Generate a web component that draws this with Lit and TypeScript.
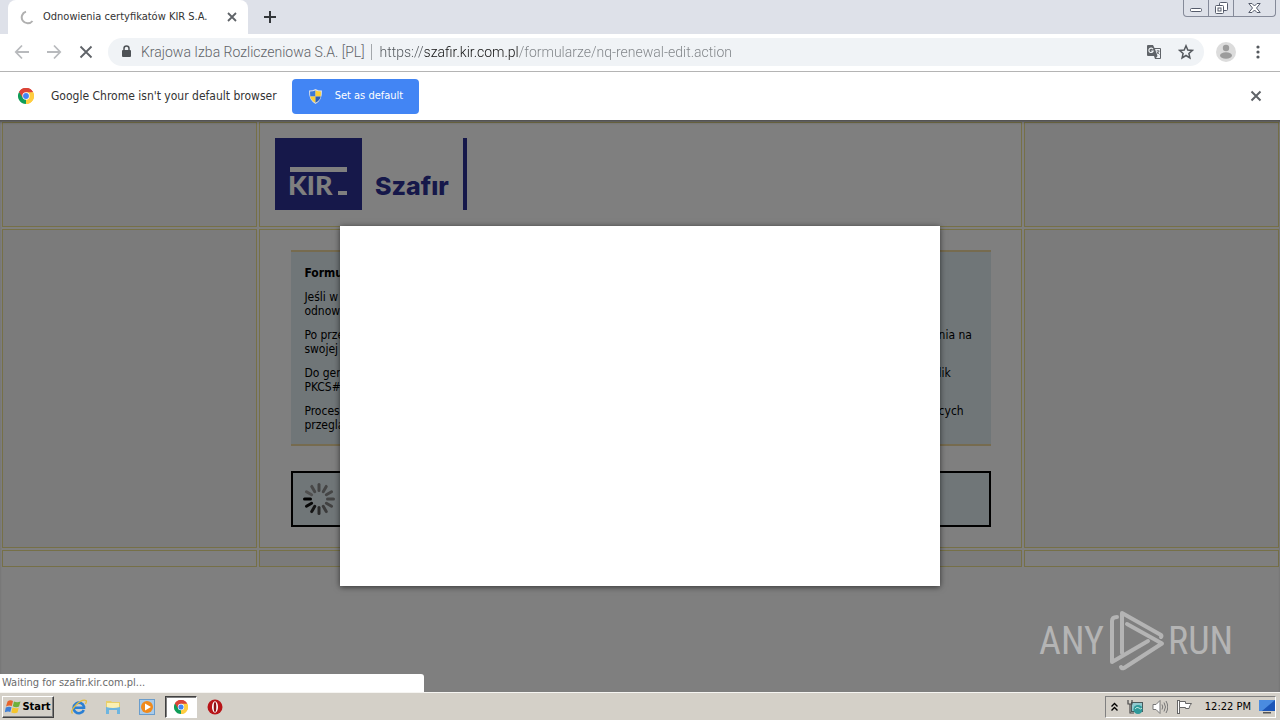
import { LitElement, html, svg, css } from "lit";
import { customElement } from "lit/decorators.js";

const chromeLogo = svg`
  <path d="M12 12 L1.6 6 A12 12 0 0 1 22.4 6 Z" fill="#db4437"/>
  <path d="M12 12 L22.4 6 A12 12 0 0 1 12 24 Z" fill="#ffcd40"/>
  <path d="M12 12 L12 24 A12 12 0 0 1 1.6 6 Z" fill="#0f9d58"/>
  <path d="M12 6.5 H22.7 L22.4 6 A12 12 0 0 0 1.6 6 L7 14.5 Z" fill="#db4437"/>
  <path d="M16.8 14.8 L11.6 24 A12 12 0 0 0 22.7 6.5 H12 Z" fill="#ffcd40"/>
  <circle cx="12" cy="12" r="5.5" fill="#fff"/>
  <circle cx="12" cy="12" r="4.4" fill="#4285f4"/>`;

const spokes = Array.from({ length: 12 }, (_, i) => {
  const shades = ["#888", "#8a8a8a", "#8a8a8a", "#868686", "#828282", "#777", "#555", "#282828", "#101010", "#000", "#a0a0a0", "#909090"];
  return svg`<line x1="17" y1="2.5" x2="17" y2="8.5" stroke=${shades[i]} stroke-width="3" stroke-linecap="round" transform=${`rotate(${i * 30} 17 17)`}/>`;
});

@customElement("browser-bar")
class BrowserBar extends LitElement {
  static styles = css`
    :host { display: block; font: 12px/16px "DejaVu Sans Condensed", "DejaVu Sans", sans-serif; color: #333; }
    button { border: 0; padding: 0; margin: 0; background: none; font: inherit; color: inherit; display: grid; place-items: center; }
    svg { display: block; }
    .strip { height: 34px; background: #dee1e9; display: flex; align-items: flex-start; padding-left: 8px; }
    .tab { align-self: stretch; width: 240px; box-sizing: border-box; background: #fff; border-radius: 8px 8px 0 0; display: flex; align-items: center; padding: 0 8px 0 12px; gap: 8px; }
    .title { flex: 1; white-space: nowrap; font-size: 11px; }
    .plus { width: 44px; height: 34px; }
    .wins { margin-left: auto; margin-right: 4px; display: flex; height: 17px; box-sizing: border-box; border: 1px solid #858a99; border-top: 0; border-radius: 0 0 4px 4px; }
    .wins button { width: 24px; }
    .wins button + button { border-left: 1px solid #858a99; width: 25px; }
    .wins button:last-child { width: 42px; }
    .tools { height: 36px; background: #fff; border-bottom: 1px solid #b4b4b4; display: flex; align-items: center; padding: 0 6px 1px; }
    .nav { width: 32px; height: 32px; }
    .omni { flex: 1; height: 28px; margin: 0 6px; border-radius: 14px; background: #f0f3f6; display: flex; align-items: center; padding: 0 2px 0 12px; font: 14px/20px "Roboto", "Open Sans", sans-serif; font-weight: 300; color: #5f6368; }
    .cert { margin-left: 9px; white-space: nowrap; }
    .rule { width: 1px; height: 16px; background: #a3a7ab; margin: 0 8px 0 6px; }
    .url { flex: 1; min-width: 0; border: 0; padding: 0; font: inherit; outline: 0; color: transparent;
      background: linear-gradient(90deg, #4d5257 45px, #111 45px 139px, #7d8185 139px); -webkit-background-clip: text; background-clip: text; }
    .act { width: 32px; height: 28px; }
    .info { height: 48px; background: #fff; display: flex; align-items: center; padding: 0 16px 0 18px; font-size: 12px; }
    .msg { margin: 0 15px 0 17px; }
    .set { display: flex; align-items: center; gap: 12px; height: 35px; padding: 0 16px; border-radius: 4px; background: #4285f4; color: #fff; font-size: 11px; }
    .close { margin-left: auto; }
  `;
  render() {
    return html`
      <div class="strip">
        <div class="tab">
          <svg width="15" height="15" viewBox="0 0 15 15" fill="none" stroke="#b0b0b0" stroke-width="2"><path d="M6 1.6A6 6 0 1 0 12.5 11"/></svg>
          <span class="title">Odnowienia certyfikatów KIR S.A.</span>
          <button aria-label="Close tab"><svg width="16" height="16" viewBox="0 0 16 16" stroke="#5f6368" stroke-width="1.800"><path d="M4 4l8 8M12 4l-8 8"/></svg></button>
        </div>
        <button class="plus" aria-label="New tab"><svg width="14" height="14" viewBox="0 0 14 14" stroke="#33363a" stroke-width="2"><path d="M7 1v12M1 7h12"/></svg></button>
        <div class="wins">
          <button aria-label="Minimize"><svg width="12" height="16" viewBox="0 0 12 16"><rect x=".5" y="8.500" width="11" height="3" rx="1" fill="#fff" stroke="#555b6b"/></svg></button>
          <button aria-label="Restore"><svg width="13" height="14" viewBox="0 0 13 14" fill="#fff" stroke="#555b6b"><rect x="4.500" y="1.500" width="8" height="8" rx="1"/><rect x=".5" y="4.500" width="8" height="8" rx="1"/><rect x="3" y="7" width="3" height="3"/></svg></button>
          <button aria-label="Close"><svg width="13" height="12" viewBox="0 0 13 12" fill="#fff" stroke="#555b6b"><path d="M.8 1.500H4L6.500 4 9 1.500H12.200L8.500 6l3.700 4.500H9L6.500 8 4 10.500H.8L4.500 6Z"/></svg></button>
        </div>
      </div>
      <div class="tools">
        <button class="nav" aria-label="Back"><svg width="16" height="16" viewBox="0 0 16 16" fill="none" stroke="#b8babd" stroke-width="1.800"><path d="M15 8H2M8 1.500L1.800 8 8 14.500"/></svg></button>
        <button class="nav" aria-label="Forward"><svg width="16" height="16" viewBox="0 0 16 16" fill="none" stroke="#b8babd" stroke-width="1.800"><path d="M1 8h13M8 1.500L14.200 8 8 14.500"/></svg></button>
        <button class="nav" aria-label="Stop"><svg width="16" height="16" viewBox="0 0 16 16" stroke="#5f6368" stroke-width="1.800"><path d="M2.500 2.500l11 11M13.500 2.500l-11 11"/></svg></button>
        <div class="omni">
          <svg width="12" height="14" viewBox="0 0 12 14"><rect x="2" y="5" width="9" height="7" rx="1" fill="#4e5256"/><path d="M4 6V3.500a2.500 2.500 0 0 1 5 0V6" fill="none" stroke="#4e5256" stroke-width="1.500"/></svg>
          <span class="cert">Krajowa Izba Rozliczeniowa S.A. [PL]</span><span class="rule"></span>
          <input class="url" aria-label="Address" spellcheck="false" value="https://szafir.kir.com.pl/formularze/nq-renewal-edit.action">
          <button class="act" aria-label="Translate"><svg width="14" height="15" viewBox="0 0 14 15"><path d="M1 0h5l1.500 3H13a1 1 0 0 1 1 1v9a1 1 0 0 1-1 1H8L7 11H1a1 1 0 0 1-1-1V1a1 1 0 0 1 1-1Z" fill="#5f6368"/><path d="M8 4h5v9H9l1.500-2Z" fill="#f0f3f6"/><path d="M6 4.200A2.200 2.200 0 1 0 6.200 6H4.200" fill="none" stroke="#f0f3f6" stroke-width="1.100"/><path d="M9.500 6h3M11 5v1M12 6q-.5 2-2.500 3M10 7l2.500 2.500" fill="none" stroke="#5f6368" stroke-width=".8"/></svg></button>
          <button class="act" aria-label="Bookmark"><svg width="16" height="16" viewBox="0 0 16 16" fill="none" stroke="#55595e" stroke-width="1.500"><path d="M8 1.800l1.800 4.200 4.500.4-3.400 3 1 4.500L8 11.500l-3.900 2.400 1-4.500-3.400-3 4.500-.4Z"/></svg></button>
        </div>
        <button class="nav" aria-label="Profile"><svg width="20" height="20" viewBox="0 0 20 20"><circle cx="10" cy="10" r="10" fill="#dcdcdc"/><circle cx="10" cy="6" r="3.200" fill="#9c9c9c"/><ellipse cx="10" cy="13.500" rx="6" ry="3.200" fill="#9c9c9c"/></svg></button>
        <button class="nav" aria-label="Menu"><svg width="4" height="14" viewBox="0 0 4 14" fill="#55595e"><circle cx="2" cy="2" r="1.600"/><circle cx="2" cy="7" r="1.600"/><circle cx="2" cy="12" r="1.600"/></svg></button>
      </div>
      <div class="info">
        <svg width="16" height="16" viewBox="0 0 24 24">${chromeLogo}</svg>
        <span class="msg">Google Chrome isn't your default browser</span>
        <button class="set">
          <svg width="15" height="15" viewBox="0 0 15 15"><path d="M7.500 0Q10 1.500 14 1.500 14.500 11 7.500 15 .5 11 1 1.500 5 1.500 7.500 0Z" fill="#d9dde6"/><path d="M7.500 1.500V7.500H2.300Q2 5 2.100 2.600 5 2.600 7.500 1.500Z" fill="#3b78d8"/><path d="M7.500 1.500V7.500h5.200Q13 5 12.900 2.600 10 2.600 7.500 1.500Z" fill="#fbd035"/><path d="M7.500 13.700V7.500H2.300Q3 11.500 7.500 13.700Z" fill="#fbd035"/><path d="M7.500 13.700V7.500h5.200Q12 11.500 7.500 13.700Z" fill="#2c5fb8"/></svg>
          Set as default
        </button>
        <button class="close" aria-label="Dismiss"><svg width="16" height="16" viewBox="0 0 16 16" stroke="#5f6368" stroke-width="2"><path d="M3.500 3.500l9 9M12.500 3.500l-9 9"/></svg></button>
      </div>`;
  }
}

@customElement("renewal-page")
class RenewalPage extends LitElement {
  static styles = css`
    :host { display: block; position: relative; overflow: hidden; background: #fff; color: #000; font: 12px/14px "DejaVu Sans Condensed", "DejaVu Sans", sans-serif; }
    .frame { display: grid; grid-template-columns: 20% 1fr 20%; grid-template-rows: 105px auto 17px; gap: 2px; padding: 2px 1px 1px 2px; }
    .cell { border: 1px solid #ece08e; }
    .shade { background: #f6f6f6; }
    .head { padding: 15px; }
    .main { padding: 20px 30px 20px 31px; }
    svg { display: block; }
    .box { background: #e1ecf0; border: solid #ecd79e; border-width: 2px 0; padding: 14px 0 12px 13px; }
    h1 { font: inherit; font-weight: bold; margin: 0; }
    p { margin: 10px 0 0; display: grid; grid-template-columns: 1fr 52px; white-space: nowrap; }
    .wait { margin-top: 25px; border: 2px solid #000; background: #e1ecf0; padding: 9px; }
    .veil { position: absolute; inset: 0; background: rgba(0, 0, 0, 0.5); box-shadow: inset 0 3px 3px -1px rgba(0, 0, 0, 0.4); display: grid; place-items: center; }
    .dialog { width: 600px; height: 360px; max-width: 100%; background: #fff; box-shadow: 0 1px 6px rgba(0, 0, 0, 0.6); }
    .mark { position: absolute; right: 40px; bottom: 19px; }
    .status { position: absolute; left: 0; bottom: 0; width: 424px; height: 18px; box-sizing: border-box; padding: 0 2px; background: #fff; border-radius: 0 3px 0 0; color: #6b6b6b; font-size: 11px; line-height: 18px; }
    .logo { font-family: "Lato", sans-serif; font-weight: 900; }
    .brand { font-family: "Inter", sans-serif; font-weight: 800; }
    .any { font-family: "Roboto Condensed", "Liberation Sans Narrow", sans-serif; font-size: 38px; font-weight: 400; }
  `;
  render() {
    return html`
      <main class="frame">
        <div class="cell shade"></div>
        <div class="cell head">
          <svg width="193" height="73" viewBox="0 0 193 73" role="img" aria-label="KIR Szafir">
            <rect width="87" height="72" fill="#2c3094"/><rect x="15" y="29" width="57" height="5" fill="#fff"/><rect x="63" y="53" width="9" height="4" fill="#fff"/>
            <text class="logo" x="13" y="57" font-size="27" fill="#fff">KIR</text>
            <text class="brand" x="100" y="57" font-size="25" fill="#2c3094">Szafır</text>
            <rect x="188" width="4" height="72" fill="#2c3094"/>
          </svg>
        </div>
        <div class="cell shade"></div>
        <div class="cell shade"></div>
        <div class="cell main">
          <section class="box">
            <h1>Formularz</h1>
            <p><span>Jeśli w</span><span></span><span>odnow</span></p>
            <p><span>Po prze</span><span>nia na</span><span>swojej</span></p>
            <p><span>Do gen</span><span>lik</span><span>PKCS#</span></p>
            <p><span>Proces</span><span>cych</span><span>przeglą</span></p>
          </section>
          <section class="wait"><svg width="34" height="34" viewBox="0 0 34 34">${spokes}</svg></section>
        </div>
        <div class="cell shade"></div>
        <div class="cell"></div><div class="cell shade"></div><div class="cell"></div>
      </main>
      <div class="veil"><div class="dialog" role="dialog" aria-label="Dialog"></div></div>
      <svg class="mark" width="208" height="66" viewBox="-2 0 208 66" role="img" aria-label="ANY RUN">
        <g fill="#b4b4b4"><text class="any" x="5" y="47">ANY</text><text class="any" x="134" y="47">RUN</text></g>
        <g fill="none" stroke="#b4b4b4" stroke-width="4" stroke-linecap="round" stroke-linejoin="round">
          <path d="M88 46V6l39 22q1 1 0 2"/><path d="M83 10q-5 0-5 4V55L114 34"/><path d="M93 17L128 36.500 90 61q-2 1-3-1"/>
        </g>
      </svg>
      <div class="status">Waiting for szafir.kir.com.pl...</div>`;
  }
}

@customElement("task-bar")
class TaskBar extends LitElement {
  static styles = css`
    :host { display: flex; align-items: center; height: 28px; box-sizing: border-box; padding: 2px 4px 2px 2px; background: #d4d0c8; border-top: 1px solid #f6f5f2; font: 11px/14px "DejaVu Sans Condensed", "DejaVu Sans", sans-serif; color: #000; }
    svg { display: block; }
    button { font: inherit; color: inherit; padding: 0; margin: 0; border: 0; background: none; display: grid; place-items: center; width: 32px; height: 22px; }
    .start { display: flex; gap: 1px; align-items: center; justify-content: center; width: 52px; margin-right: 9px; font-weight: bold; background: #d4d0c8; border: 1px solid; border-color: #fff #404040 #404040 #fff; box-shadow: inset -1px -1px #808080; }
    .quick { display: flex; gap: 2px; }
    .on { background: #fff; border: 1px solid; border-color: #404040 #fff #fff #404040; box-shadow: inset 1px 1px #808080; }
    .tray { margin-left: auto; display: flex; align-items: center; gap: 8px; height: 20px; padding: 0 0 0 4px; border: 1px solid; border-color: #808080 #fff #fff #808080; }
    .time { margin: 0 0 0 4px; }
  `;
  render() {
    return html`
      <button class="start">
        <svg width="16" height="16" viewBox="0 0 16 16"><path d="M2.500 2.500Q5 .5 8 2L6.800 7Q4 6 1 7.500Z" fill="#e8642c"/><path d="M9 2.500Q12 4 15.500 2.500L14 7.500Q11 9 7.800 7.300Z" fill="#6fb03a"/><path d="M.8 8.500Q4 7 6.500 8.200L5.300 13Q3 12-.2 13.300Z" fill="#3f7fd6"/><path d="M7.500 8.500Q11 10 13.700 8.700L12.500 13.500Q9.500 15 6.300 13.400Z" fill="#f5c52c"/></svg>Start
      </button>
      <div class="quick">
        <button aria-label="Internet Explorer"><svg width="16" height="16" viewBox="0 0 16 16" fill="none"><path d="M12.800 11A5.300 5.300 0 1 1 13 7.500V8.700H4" stroke="#2a7fd4" stroke-width="2.600"/><path d="M1.500 14.500Q-1 12 5 6T15 1.500Q15.800 2.500 14.500 5" stroke="#e3bb3d" stroke-width="1.300"/></svg></button>
        <button aria-label="Explorer"><svg width="16" height="16" viewBox="0 0 16 16"><path d="M1 2h5l1 1h8v6H1Z" fill="#e8cf6b"/><path d="M2 4h12v5H2Z" fill="#fbf0b3"/><path d="M1 8q7 2 14 0v7h-3v-4H4v4H1Z" fill="#6db5e0"/></svg></button>
        <button aria-label="Media Player"><svg width="16" height="16" viewBox="0 0 16 16"><rect x=".5" y=".5" width="15" height="15" fill="#a9cbea" stroke="#6a9dcc"/><circle cx="8" cy="8" r="6" fill="#f08a1c"/><path d="M6 4.500v7L12 8Z" fill="#fff"/></svg></button>
        <button class="on" aria-label="Chrome"><svg width="14" height="14" viewBox="0 0 24 24">${chromeLogo}</svg></button>
        <button aria-label="Opera"><svg width="16" height="16" viewBox="0 0 16 16"><circle cx="8" cy="8" r="7.500" fill="#b81418"/><ellipse cx="8" cy="8" rx="3" ry="5.800" fill="#fff"/><ellipse cx="8" cy="8" rx="1.300" ry="5" fill="#8e1014"/></svg></button>
      </div>
      <div class="tray">
        <svg width="9" height="10" viewBox="0 0 9 10" fill="none" stroke="#000" stroke-width="1.400"><path d="M1.500 4.500l3-3 3 3M1.500 8.500l3-3 3 3"/></svg>
        <svg width="17" height="16" viewBox="0 0 17 16"><rect x="4.500" y="3.500" width="11" height="9" fill="#8fc9cf" stroke="#4a5a5c"/><path d="M1 1v4h4V1M3 5v9h4" fill="none" stroke="#4a4a4a" stroke-width="1.200"/><circle cx="11" cy="10.500" r="4.500" fill="#2f9a9a"/><path d="M8 10q2-3 4-1t3 0" stroke="#bfe6df" fill="none"/></svg>
        <svg width="16" height="16" viewBox="0 0 16 16" fill="none" stroke="#777"><path d="M1 5.500h3L8 1.500v13L4 10.500H1Z" fill="#fff"/><path d="M10 5.500q1.500 2.500 0 5M12 3.500q3 4.500 0 9M14 2q3.500 6 0 12"/></svg>
        <svg width="17" height="16" viewBox="0 0 17 16" fill="#fff" stroke="#666"><rect x="1.500" y="1.500" width="2" height="13"/><path d="M3.500 2.500h6v2h6q-2 2-2.500 5H9.500v-1h-6Z"/></svg>
        <span class="time">12:22 PM</span>
        <svg width="16" height="14" viewBox="0 0 16 14"><rect width="16" height="11" fill="#1c56b8"/><path d="M0 0h16L3 11H0Z" fill="#4a8be0"/><path d="M4 12h8v1.500H4Z" fill="#555"/></svg>
      </div>`;
  }
}

@customElement("app-root")
class AppRoot extends LitElement {
  static styles = css`
    :host { display: flex; flex-direction: column; height: 100vh; }
    .page { flex: 1; min-height: 0; }
  `;
  render() {
    return html`<browser-bar></browser-bar><renewal-page class="page"></renewal-page><task-bar></task-bar>`;
  }
}
